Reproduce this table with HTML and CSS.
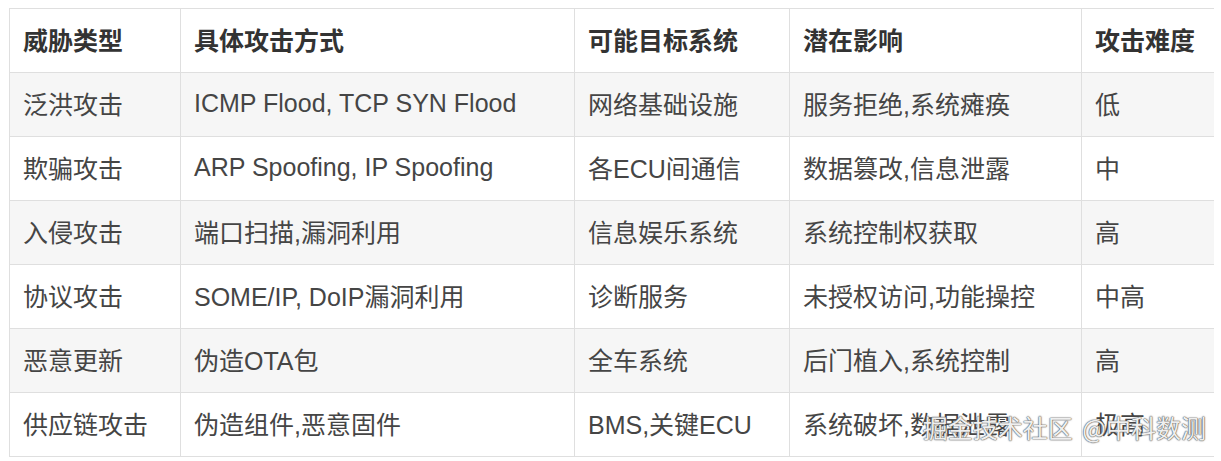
FILE: index.html
```html
<!DOCTYPE html>
<html lang="zh">
<head>
<meta charset="utf-8">
<title>威胁类型</title>
<link rel="stylesheet" href="styles.css">
</head>
<body>
<div class="page">
  <table class="threats">
    <colgroup>
      <col class="c1"><col class="c2"><col class="c3"><col class="c4"><col class="c5">
    </colgroup>
    <thead>
      <tr><th>威胁类型</th><th>具体攻击方式</th><th>可能目标系统</th><th>潜在影响</th><th>攻击难度</th></tr>
    </thead>
    <tbody>
      <tr><td>泛洪攻击</td><td>ICMP Flood, TCP SYN Flood</td><td>网络基础设施</td><td>服务拒绝,系统瘫痪</td><td>低</td></tr>
      <tr><td>欺骗攻击</td><td>ARP Spoofing, IP Spoofing</td><td>各ECU间通信</td><td>数据篡改,信息泄露</td><td>中</td></tr>
      <tr><td>入侵攻击</td><td>端口扫描,漏洞利用</td><td>信息娱乐系统</td><td>系统控制权获取</td><td>高</td></tr>
      <tr><td>协议攻击</td><td>SOME/IP, DoIP漏洞利用</td><td>诊断服务</td><td>未授权访问,功能操控</td><td>中高</td></tr>
      <tr><td>恶意更新</td><td>伪造OTA包</td><td>全车系统</td><td>后门植入,系统控制</td><td>高</td></tr>
      <tr><td>供应链攻击</td><td>伪造组件,恶意固件</td><td>BMS,关键ECU</td><td>系统破坏,数据泄露</td><td>极高</td></tr>
    </tbody>
  </table>
  <div class="watermark">掘金技术社区 @中科数测</div>
</div>
</body>
</html>
```
FILE: styles.css
```css
html, body {
  margin: 0;
  padding: 0;
  background: #ffffff;
}
.page {
  position: relative;
  width: 1221px;
  height: 461px;
  padding: 8px 0 0 9px;
  box-sizing: border-box;
  font-family: "Liberation Sans", "Noto Sans CJK SC", sans-serif;
}
.threats {
  border-collapse: collapse;
  table-layout: fixed;
  width: 1204px;
  font-size: 25px;
  color: #454545;
}
.c1 { width: 171px; }
.c2 { width: 394px; }
.c3 { width: 215px; }
.c4 { width: 292px; }
.c5 { width: 132px; }
.threats th,
.threats td {
  border: 1px solid #dfdfdf;
  height: 64px;
  padding: 0 0 3px 13px;
  text-align: left;
  vertical-align: middle;
  white-space: nowrap;
  overflow: visible;
  box-sizing: border-box;
}
.threats th:last-child,
.threats td:last-child {
  border-right: 0;
}
.threats th {
  font-weight: bold;
  color: #333333;
  background: #ffffff;
}
.threats tbody tr:nth-child(odd) td {
  background: #f6f6f6;
}
.threats tbody tr:nth-child(even) td {
  background: #ffffff;
}
.watermark {
  position: absolute;
  right: 15px;
  top: 410px;
  font-family: "Noto Sans CJK SC", sans-serif;
  font-size: 25px;
  line-height: 34px;
  word-spacing: 4px;
  color: rgba(255, 255, 255, 0.92);
  text-shadow: 0 0 1px #5a5a5a, 0 0 1px #5a5a5a, 0 0 2px #7a7a7a;
}
```
